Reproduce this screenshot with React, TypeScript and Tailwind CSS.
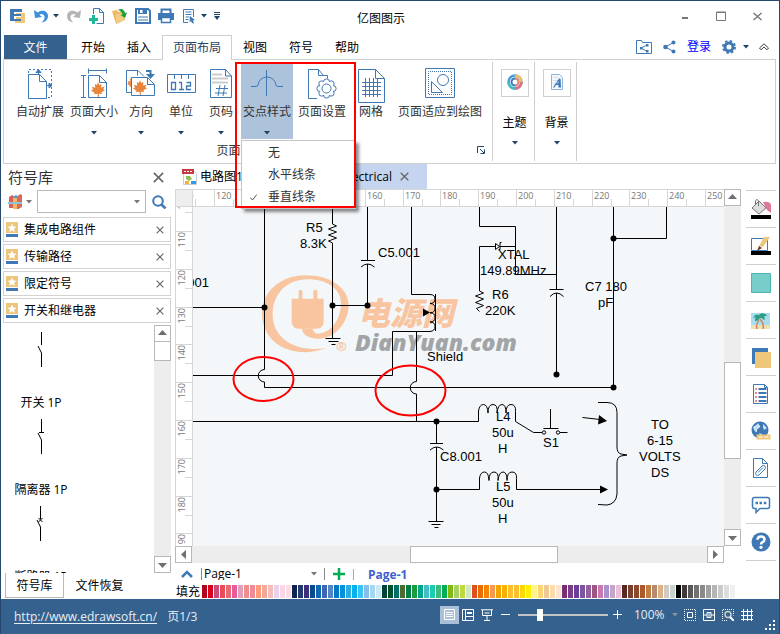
import React from "react";

type Kids = { children?: React.ReactNode };

function Ico({ w = 16, h = 16, children, className = "" }: Kids & { w?: number; h?: number; className?: string }) {
  return (
    <svg width={w} height={h} viewBox={`0 0 ${w} ${h}`} fill="none" className={`shrink-0 ${className}`} aria-hidden="true">
      {children}
    </svg>
  );
}

function Caret({ color = "#1f4468", className = "" }: { color?: string; className?: string }) {
  return (
    <Ico w={6} h={4} className={className}>
      <path d="M0 0h6L3 3.5z" fill={color} />
    </Ico>
  );
}

const B = "#3f79b5";

/* ---------- Title bar ---------- */

function TitleBar() {
  const btn = "flex items-center";
  return (
    <header className="grid h-[34px] shrink-0 grid-cols-[1fr_auto_1fr] items-center pr-[17px] pl-[9px]">
      <div className="flex items-center gap-[7px] pb-1">
        <Ico>
          <path d="M6 5h7v2H6zM6 9h7v2H6zM11 5h4v10H5v-2h6z" fill="#efc77b" />
          <path d="M0 1h12v3H4v2h7v2H4v3h7v2H0z" fill={B} />
        </Ico>
        <button className={`${btn} gap-1`} aria-label="Undo">
          <Ico>
            <path d="M1 2l1 8 7-1-2.600-2.300C9 5 12 7 11.500 10c-.3 2-1.500 3-3 4.500 4-.5 6.500-3 6.500-6.500 0-5-6-7-10.300-3.500z" fill="#3c8fdc" />
          </Ico>
          <Caret />
        </button>
        <button className={btn} aria-label="Redo">
          <Ico>
            <path d="M15 2l-1 8-7-1 2.600-2.300C7 5 4 7 4.500 10c.3 2 1.500 3 3 4.500C3.500 14 1 11.500 1 8c0-5 6-7 10.300-3.500z" fill="#b4b4b4" />
          </Ico>
        </button>
        <button className={btn} aria-label="New">
          <Ico>
            <path d="M4.500 6V.5h6l4 4v11h-7M10.500.5v4h4" stroke={B} />
            <path d="M3 7h3v3h3v3H6v3H3v-3H0v-3h3z" fill="#1fb999" />
          </Ico>
        </button>
        <button className={btn} aria-label="Open">
          <Ico>
            <path d="M0 3l5-1 1 2 6-1 1 9-9 4z" fill="#efb95c" />
            <path d="M4 6l10-1-3 8-7 3z" fill="#f3cd85" />
            <path d="M6 2c3-2 6-1 7 3l2-.5L13 10 8.500 7l2-.6C10 4 8.500 3 6 2z" fill="#18a03c" />
          </Ico>
        </button>
        <button className={btn} aria-label="Save">
          <Ico>
            <path d="M1 1h12l2 2v12H1z" fill="#fff" stroke={B} strokeWidth="2" />
            <path d="M3 1h9v5H3z" fill={B} />
            <path d="M5 2h5v3H5z" fill="#fff" />
            <path d="M8 2h2v3H8zM3 9h10M3 12h10" stroke={B} fill={B} />
          </Ico>
        </button>
        <button className={btn} aria-label="Print">
          <Ico>
            <path d="M3.500 5V1.500h9V5" stroke={B} strokeWidth="2" />
            <path d="M0 5h16v7H0z" fill={B} />
            <path d="M3.500 9.500h9v5h-9z" fill="#fff" stroke={B} strokeWidth="1.500" />
          </Ico>
        </button>
        <button className={`${btn} gap-1`} aria-label="Quick styles">
          <Ico>
            <path d="M12.500 9V1.500h-10v13H7" stroke={B} />
            <path d="M4.500 4h6M4.500 6.500h6M4.500 9h4M4.500 11.500h3" stroke={B} />
            <path d="M9 8l5 4-2 .5 1 3-2-.5-1-2-1.500 1.500z" fill={B} />
          </Ico>
          <Caret />
        </button>
        <button className={btn} aria-label="Customize toolbar">
          <Ico w={6} h={8}>
            <path d="M0 .5h6M0 2.500h6" stroke="#1f4468" />
            <path d="M0 4h6L3 8z" fill="#1f4468" />
          </Ico>
        </button>
      </div>
      <h1 className="pt-0.5 pr-2.5 text-xs text-black">亿图图示</h1>
      <div className="flex items-center justify-end gap-[27px] pb-1 text-[#777]">
        <button aria-label="Minimize" className={btn}><Ico w={8} h={10}><path d="M1 7h6" stroke="currentColor" strokeWidth="2" /></Ico></button>
        <button aria-label="Maximize" className={btn}><Ico w={10} h={10}><path d="M.5 1h9v8.500h-9zM0 1.500h10" stroke="currentColor" /></Ico></button>
        <button aria-label="Close" className={btn}><Ico w={9} h={9}><path d="M.5 1l8 7M8.500 1l-8 7" stroke="currentColor" strokeWidth="1.400" /></Ico></button>
      </div>
    </header>
  );
}

/* ---------- Ribbon tabs ---------- */

function MenuTabs() {
  const tab = "h-6 w-[46px] pt-px text-xs text-black";
  return (
    <nav className="relative z-10 flex h-6 shrink-0 items-center pr-[10px] pl-[3px]">
      <button className="h-6 w-[63px] bg-[#34618e] pt-px text-xs text-white">文件</button>
      <span className="w-[3px]" />
      <button className={tab}>开始</button>
      <button className={tab}>插入</button>
      <button className="-mb-px h-[25px] w-[70px] border border-b-0 border-[#cfcfcf] bg-white text-xs text-[#1f4468]">页面布局</button>
      <button className={tab}>视图</button>
      <button className={tab}>符号</button>
      <button className={tab}>帮助</button>
      <div className="ml-auto flex items-center">
        <button aria-label="Shared folder">
          <Ico w={16} h={14}>
            <path d="M.5 13.500V.5h5l1 2h9v11z" stroke={B} />
            <path d="M11 5L5 8l6 3.500" stroke={B} />
            <path d="M10 4h2.500v2.500H10zM4 7h2.500v2.500H4zM10 10h2.500v2.500H10z" fill={B} />
          </Ico>
        </button>
        <button aria-label="Share" className="ml-[11px]">
          <Ico w={13} h={14}>
            <path d="M10.500 2.500L2.500 7l8 4.500" stroke={B} />
            <circle cx="10.500" cy="2.500" r="2" fill={B} /><circle cx="2.500" cy="7" r="2.300" fill={B} /><circle cx="10.500" cy="11.500" r="2" fill={B} />
          </Ico>
        </button>
        <a href="#login" className="ml-[11px] text-xs text-[#0000ff]">登录</a>
        <button aria-label="Settings" className="ml-[11px] flex items-center gap-[7px]">
          <Ico w={14} h={14}>
            <circle cx="7" cy="7" r="4" stroke={B} strokeWidth="3" />
            <circle cx="7" cy="7" r="6" stroke={B} strokeWidth="2" strokeDasharray="2.400 2.312" />
          </Ico>
          <Caret />
        </button>
        <button aria-label="Collapse ribbon" className="ml-[10px]">
          <Ico w={10} h={8}>
            <path d="M.5 5L5 .8 9.500 5 8 6.800 5 4 2 6.800z" stroke="#444" />
          </Ico>
        </button>
      </div>
    </nav>
  );
}

/* ---------- Ribbon ---------- */

const LEAF = "M7 0l1.300 3 2.200-1-.5 3.500 3.500-.8-1.200 2.600 1.700 1-3.500 2 .5 1.700-3.200-.3.200 3.300-1.200-.2-.2-3-3.600.5.6-1.500L0 8.500l2-.9L.8 4.700l3.500 1L3.700 2 6 3z";

const GEAR_LOBES = Array.from({ length: 8 }, (_, i) => {
  const a = (i * Math.PI) / 4;
  return [18.5 + 6.6 * Math.cos(a), 20.5 + 6.6 * Math.sin(a)];
});

function RibbonButton({ label, width, caret, active, children }: Kids & { label: string; width: string; caret?: boolean; active?: boolean }) {
  return (
    <button className={`flex h-[75px] shrink-0 flex-col items-center pt-1 ${width} ${active ? "bg-[#adc3db]" : ""}`}>
      <span className="flex h-9 items-start justify-center">{children}</span>
      <span className="text-xs leading-4 whitespace-nowrap text-[#333]">{label}</span>
      {caret && <Caret className="mt-[11px]" />}
    </button>
  );
}

function Popup() {
  const item = "flex h-[22px] w-full items-center gap-[11px] pl-2 text-left text-xs text-[#333]";
  return (
    <div role="menu" className="absolute top-[76px] left-0 z-20 w-[115px] border border-[#c4c4c4] bg-white pt-px shadow-[3px_3px_3px_rgba(0,0,0,0.45)]">
      <button role="menuitem" className={item}><span className="w-[7px]" />无</button>
      <button role="menuitem" className={item}><span className="w-[7px]" />水平线条</button>
      <button role="menuitem" className={item}>
        <Ico w={7} h={7}><path d="M.3 3.500L2.500 6 6.800.5" stroke="#555" /></Ico>
        垂直线条
      </button>
    </div>
  );
}

function Ribbon() {
  return (
    <section className="mr-[3px] ml-[2px] flex h-[105px] shrink-0 border border-[#cfcfcf]">
      <div className="my-[2px] flex w-[489px] flex-col border-r border-[#cfcfcf] pt-[2px]">
        <div className="flex pl-[9px]">
          <RibbonButton label="自动扩展" width="w-[54px]">
            <Ico w={25} h={31}>
              <path d="M.5 30.500v-24h11l7 7v17zM11.500 6.500v7h7" stroke={B} />
              <path d="M.5 5V1.500h23v28H20" stroke={B} strokeDasharray="2 2" />
              <path d="M10.500 6V2M8 4.500l2.500-3 2.500 3zM18 17.500h5M21 15l3 2.500-3 2.500z" stroke={B} fill={B} />
            </Ico>
          </RibbonButton>
          <RibbonButton label="页面大小" width="w-[54px]" caret>
            <Ico w={26} h={31}>
              <path d="M7.500.5v5M25.500.5v5M7.500 2.500h18M0 7.500h5M0 29.500h5M2.500 7.500v22M7.500 29.500v-22h11l7 7v15zM18.500 7.500v7h7" stroke={B} />
              <path d={LEAF} transform="translate(10 14)" fill="#e8843c" />
            </Ico>
          </RibbonButton>
          <RibbonButton label="方向" width="w-10" caret>
            <Ico w={30} h={31}>
              <path d="M5 24.500H.5v-22H12l6 6M11.500 2.500v5" stroke={B} />
              <path d={LEAF} transform="translate(1 9) scale(.8)" fill="#e8843c" />
              <path d="M5.500 9.500h16l7 7v11h-23z" fill="#fff" stroke={B} />
              <path d="M21.500 9.500v7h7" stroke={B} />
              <path d={LEAF} transform="translate(7 12)" fill="#e8843c" />
              <path d="M20 3h4.500v4" stroke={B} strokeWidth="2" />
              <path d="M20 6h9l-4.500 5z" fill={B} />
            </Ico>
          </RibbonButton>
          <RibbonButton label="单位" width="w-10" caret>
            <Ico w={29} h={31}>
              <path d="M.5 6.500h28v18H.5zM7.500 7v4M14.500 7v4M21.500 7v4" stroke={B} />
              <path d="M4.500 14.500h4v7h-4zM12 14.500h2.500v7M12 21.500h5M19.500 14.500h4v3.500h-4v3.500h4.500" stroke={B} strokeWidth="1.300" />
            </Ico>
          </RibbonButton>
          <RibbonButton label="页码" width="w-10" caret>
            <Ico w={23} h={31}>
              <path d="M.5 29.500v-28h15l6 6.500v21.500zM15.500 1.500v6.500h6" stroke={B} />
              <path d="M2 6.500h10M2 10.500h16M2 14.500h16" stroke="#ccc" strokeWidth="2" />
              <path d="M6 20.500h12M5 25h12M10 17l-2 11M15 17l-2 11" stroke={B} />
            </Ico>
          </RibbonButton>
          <div className="relative flex">
            <RibbonButton label="交点样式" width="w-[52px]" caret active>
              <Ico w={32} h={31}>
                <path d="M0 18.500h5l2-1a9 8.500 0 0 1 18 0l2 1h5M15.500 2v26" stroke={B} />
              </Ico>
            </RibbonButton>
            <RibbonButton label="页面设置" width="w-[58px]">
              <Ico w={29} h={31}>
                <path d="M9 30.500H.5v-29h10l5 6h4v3M10.500 1.500v6h7" stroke={B} />
                {GEAR_LOBES.map(([x, y], i) => <circle key={i} cx={x} cy={y} r="3" fill="#fff" stroke={B} />)}
                <circle cx="18.500" cy="20.500" r="7.200" fill="#fff" />
                <circle cx="18.500" cy="20.500" r="4.500" stroke={B} />
              </Ico>
            </RibbonButton>
            <Popup />
            <div className="pointer-events-none absolute -top-0.5 -left-1.5 z-30 h-[146px] w-[121px] border-2 border-[#ff0000]" />
          </div>
          <RibbonButton label="网格" width="w-10">
            <Ico w={27} h={36}>
              <path d="M.5 34.500v-33h17l9 9v24zM17.500 1.500v9h9" stroke={B} />
              <path d="M4 14.500h19M4 18.500h19M4 22.500h19M4 26.500h19M7.500 10v19M11.500 10v19M15.500 10v19M19.500 10v19" stroke={B} />
            </Ico>
          </RibbonButton>
          <RibbonButton label="页面适应到绘图" width="w-[98px]">
            <Ico w={30} h={31}>
              <path d="M.5.5h29v29H.5z" stroke={B} />
              <path d="M3.500 3.500h23v23h-23z" stroke={B} strokeDasharray="1 1" strokeDashoffset=".5" />
              <circle cx="18" cy="12" r="5.500" stroke={B} />
              <path d="M6.500 13.500v11h11z" stroke={B} />
            </Ico>
          </RibbonButton>
        </div>
        <div className="flex flex-1 items-center pr-[7px]">
          <span className="flex-1 pt-px text-center text-xs text-[#333]">页面设置</span>
          <button aria-label="Page setup options">
            <Ico w={8} h={8}>
              <path d="M.5 7V.5H7M3 3l4 4M7.500 3.500v4h-4" stroke="#1f4468" />
            </Ico>
          </button>
        </div>
      </div>
      <BigButton label="主题">
        <Ico>
          <circle cx="8" cy="8" r="6.500" stroke="#4b9fd6" strokeWidth="2.500" />
          <path d="M8 1.500A6.500 6.500 0 0 1 14.500 8" stroke="#f3bb66" strokeWidth="2.500" />
          <path d="M14.500 8A6.500 6.500 0 0 1 8 14.500" stroke="#e66a86" strokeWidth="2.500" />
          <path d="M8 14.500A6.500 6.500 0 0 1 1.500 8" stroke="#3dbec2" strokeWidth="2.500" />
          <circle cx="8" cy="8" r="3.500" stroke="#3f79b5" strokeWidth="2" />
          <path d="M8 4.500a3.500 3.500 0 0 1 0 7" stroke="#ef8f72" strokeWidth="2" />
        </Ico>
      </BigButton>
      <BigButton label="背景">
        <Ico w={12} h={16}>
          <path d="M.5.5h8l3 3v12H.5z" fill="#f3f8fd" stroke="#8fb3d9" />
          <path d="M2 3.500h5M2 6.500h8M2 9.500h8" stroke="#cfdfef" />
          <path d="M2 13.500L8 4.500h1.500l.5 9H7.500l-.2-2.500H5l-1.500 2.500zM6 9.500h1.400V7z" fill={B} fillRule="evenodd" />
        </Ico>
      </BigButton>
    </section>
  );
}

function BigButton({ label, children }: Kids & { label: string }) {
  return (
    <button className="my-[2px] flex w-[42px] shrink-0 flex-col items-center border-r border-[#cfcfcf] pt-[7px] pl-[2px]">
      <span className="flex size-7 items-center justify-center border border-[#cfcfcf] pb-0.5">{children}</span>
      <span className="mt-[18px] text-xs leading-4 text-black">{label}</span>
      <Caret className="mt-[10px]" />
    </button>
  );
}

/* ---------- Symbol library ---------- */

function Cross({ size = 9 }: { size?: number }) {
  return (
    <svg width={size} height={size} viewBox="0 0 9 9" className="shrink-0" aria-hidden="true">
      <path d="M.7.7l7.600 7.600M8.300.7L.7 8.300" stroke="#666" strokeWidth="1.300" />
    </svg>
  );
}

function ArrowButton({ dir }: { dir: "up" | "down" | "left" | "right" }) {
  const d = { up: "M1 7h9L5.500 2z", down: "M1 4h9L5.500 9z", left: "M8 1v9L3 5.500z", right: "M3 1v9l5-4.500z" }[dir];
  return (
    <button aria-label={`Scroll ${dir}`} className="flex size-[17px] shrink-0 items-center justify-center border border-[#b8b8b8] bg-white">
      <Ico w={11} h={11}><path d={d} fill="#707070" /></Ico>
    </button>
  );
}

const LIBRARIES = ["集成电路组件", "传输路径", "限定符号", "开关和继电器"];

const SYMBOLS = [
  { name: "开关 1P", path: "M9.500 1v13M9.500 22v14M9.500 22L6 15" },
  { name: "隔离器 1P", path: "M9.500 1v13M7 14.500h5M9.500 22v14M9.500 22L6 15" },
  { name: "断路器 1P", path: "M8.500 1v13M6.500 13l4 4M10.500 13l-4 4M8.500 22v14M8.500 22L5 15" },
];

function SymbolPanel() {
  return (
    <aside className="flex w-[174px] shrink-0 flex-col pl-[2px] pr-1">
      <div className="flex h-[26px] shrink-0 items-center justify-between pr-[7px] pl-[5px]">
        <h2 className="text-[15px] text-[#333]">符号库</h2>
        <button aria-label="Close panel"><Cross size={11} /></button>
      </div>
      <div className="mb-1 flex h-[23px] shrink-0 items-center pl-[5px] pr-[4px]">
        <button aria-label="Libraries" className="flex items-center gap-[3px]">
          <Ico w={15} h={16}>
            <path d="M1 3l3-2 3 2v11H1z" fill="#dd5f5a" /><path d="M5 3l3-2 3 2v12H5z" fill="#4e9bcf" /><path d="M9 3l3-3 2 1v12l-4 2H9z" fill="#d9685f" />
            <path d="M5 4h4v11H5z" fill="#f0bb60" /><path d="M0 8h14v2H0z" fill="#8cc3dd" />
          </Ico>
          <Caret color="#777" />
        </button>
        <div className="ml-[5px] flex h-[23px] w-[109px] items-center border border-[#b8b8b8] pr-[5px]">
          <input aria-label="Search symbols" className="h-full min-w-0 flex-1 px-1 text-xs outline-none" />
          <button aria-label="Search history"><Caret color="#777" /></button>
        </div>
        <button aria-label="Search" className="ml-auto">
          <Ico w={15} h={14}>
            <circle cx="6" cy="6" r="4.800" stroke={B} strokeWidth="2" /><path d="M9.500 9.500l4 4" stroke={B} strokeWidth="2.500" />
          </Ico>
        </button>
      </div>
      <div className="flex flex-col gap-0.5">
        {LIBRARIES.map((n) => (
          <div key={n} className="flex h-[25px] items-center border border-[#d3d3d3] pr-[6px] pl-[2px]">
            <Ico w={12} h={15}>
              <path d="M0 0h12v11H0z" fill="#edc57b" /><path d="M0 12h12v3H0z" fill={B} />
              <path d="M6 1.500l1.300 2.900 3.200.3-2.400 2.100.7 3.100L6 8.300 3.200 9.900l.7-3.100L1.500 4.700l3.200-.3z" fill="#fff" />
            </Ico>
            <span className="ml-1.5 flex-1 text-xs text-black">{n}</span>
            <button aria-label={`Close ${n}`}><Cross size={8} /></button>
          </div>
        ))}
      </div>
      <div className="mt-0.5 flex min-h-0 flex-1">
        <ul className="flex-1 overflow-hidden pt-1.5">
          {SYMBOLS.map((s) => (
            <li key={s.name} className="flex h-[87px] w-[76px] flex-col items-center">
              <Ico w={18} h={36}><path d={s.path} stroke="#000" /></Ico>
              <span className="mt-7 text-xs leading-4 whitespace-nowrap text-black">{s.name}</span>
            </li>
          ))}
        </ul>
        <div className="flex w-[17px] shrink-0 flex-col bg-[#ededed]">
          <ArrowButton dir="up" />
          <div className="h-[19px] border border-t-0 border-[#b8b8b8] bg-white" />
          <div className="flex-1" />
          <ArrowButton dir="down" />
        </div>
      </div>
      <div className="flex h-[26px] shrink-0 items-start pl-[2px] text-xs text-black">
        <button className="h-[25px] w-[59px] border border-t-0 border-[#b8b8b8] pt-px">符号库</button>
        <button className="h-[25px] w-[71px]">文件恢复</button>
      </div>
    </aside>
  );
}

/* ---------- Drawing area ---------- */

const TOP_MARKS = Array.from({ length: 15 }, (_, i) => 110 + i * 10);
const SIDE_MARKS = Array.from({ length: 10 }, (_, i) => 100 + i * 10);
const GAP = 37.8;

function TopRuler() {
  return (
    <svg width="100%" height="18" className="block bg-white" aria-hidden="true">
      <path d="M0 .5h560" stroke="#d6d6d6" />
      {TOP_MARKS.map((m, i) => {
        const x = Math.round(i * GAP - 17.1) + 0.5;
        return (
          <g key={m}>
            <path d={`M${x} 0v18M${x + 19} 10v8`} stroke="#d6d6d6" />
            <text x={x + 1.5} y="10" fontSize="9" fill="#777">{m}</text>
          </g>
        );
      })}
      <path d="M0 17.500h560" stroke="#d6d6d6" />
    </svg>
  );
}

function SideRuler() {
  return (
    <svg width="18" height="339" className="block shrink-0 bg-white" aria-hidden="true">
      <path d="M.5 0v339M17.500 0v339" stroke="#d6d6d6" />
      {SIDE_MARKS.map((m, i) => {
        const y = Math.round(i * GAP - 13.8) + 0.5;
        return (
          <g key={m}>
            <path d={`M0 ${y}h18M10 ${y + 19}h8`} stroke="#d6d6d6" />
            <text transform={`translate(9.500 ${y + 16}) rotate(-90)`} fontSize="9" fill="#777">{m}</text>
          </g>
        );
      })}
    </svg>
  );
}

const WIRES = [
  "M264.500 207V369.500a6 6 0 0 0 0 12.500V387.500H613.500",
  "M193 307.500H264.500",
  "M193 375.500H392.500V331.500H431",
  "M193 421.500H478.500",
  "M332.500 207V224l4 2-8 3 8 3-8 3 8 3-8 3 4 2V338.500",
  "M325.500 338.500h15M328.500 341.500h10M331.500 344.500h4",
  "M332.500 305.500H367.500",
  "M367.500 207V260.500M361 260.500h14M361 267q6.500-6 13.500 0M367.500 264V305.500",
  "M411.500 207V294.500H430M416.500 331.500V381.500a6 6 0 0 0 0 12.500V421.500",
  "M430 294.500q5 0 5 4.500t-5 4.500q5 0 5 4.700t-5 4.600q5 0 5 4.700t-5 4.500q5 0 5 4.500t-5 5M435.500 294v37",
  "M479.500 207V226.500H515.500V274.500H556.500",
  "M515.500 246.500H500M496 246.500H479.500V291l4 2-8 3 8 3-8 3.500 8 3-7 3 3 3",
  "M495.500 243.500v6l4-3zM501.500 242.500h-1.500v7h-1.500",
  "M556.500 207V289.500M549.500 289.500h14M550 296.500q6.500-7 13.500 0M556.500 293V374.500",
  "M613.500 207V387.500M613.500 238.500H666.500V207",
  "M478.500 421.500V411q1-6.500 5-6.500t4.500 8.500q0-8.500 5-8.500t4 8.500q1-8.500 5-8.500t4 8.500q0-8.500 5-8.500t4.500 7V421.500L533.500 432.500H542M560 432.500h7.500M543.500 428.500h15M550.500 409v19.500",
  "M436.500 421.500V443.500M430 443.500h13M430 450q6.500-6 13.500 0M436.500 447V521.500M428.500 521.500h15M431.500 524.500h9M434.500 527.500h4",
  "M436.500 489.500H479.500V478q1-6 5-6t4.500 8.500q0-8.500 5-8.500t4 8.500q1-8.500 5-8.500t4 8.500q0-8.500 5-8.500t4.500 6.500V489.500H602",
  "M582.500 417.500L600 419.500",
  "M598 402.500h9q10 0 10 10V447q0 6 4 7l6 1-6 1q-4 1-4 7V494q-1 10-10 11l-9-.5",
];

const DOTS: [number, number][] = [
  [264.5, 307.5], [332.5, 305.5], [367.5, 305.5], [613.5, 238.5], [613.5, 387.5],
  [556.5, 374.5], [436.5, 421.5], [436.5, 489.5],
];

const LABELS: [number, number, string][] = [
  [306, 232, "R5"], [300, 248, "8.3K"], [378, 257, "C5.001"], [167, 287, "C4.001"],
  [427, 361, "Shield"], [498, 259, "XTAL"], [480, 275, "149.89MHz"], [492, 299, "R6"],
  [485, 315, "220K"], [585, 291, "C7 180"], [598, 307, "pF"], [496, 421, "L4"],
  [492, 437, "50u"], [498, 453, "H"], [543, 447, "S1"], [440, 461, "C8.001"],
  [496, 491, "L5"], [492, 507, "50u"], [498, 523, "H"], [651, 429, "TO"],
  [647, 445, "6-15"], [639, 461, "VOLTS"], [651, 477, "DS"],
];

function Diagram() {
  return (
    <svg width="532" height="339" viewBox="193 207 532 339" fill="none" className="block shrink-0" role="img" aria-label="Circuit diagram">
      <g transform="translate(256 268) scale(.3333)" fill="#f8c5a0">
        <path d="M212 240C120 275 18 235 18 135 18 70 75 22 150 22c75 0 128 40 128 90 0 53-43 100-88 100-25 0-50-7-52-30h32c2 14 15 18 28 13 37-10 57-50 57-90 0-40-40-71-100-71C95 34 50 75 50 140c0 65 60 115 162 100z" />
        <path d="M107 92h21V70q0-5 5.500-5t5.500 5v22h33V70q0-5 6-5t6 5v22h19v68q0 22-22 22h-52q-22 0-22-22z" />
      </g>
      <text x="336" y="351" fontSize="13" fontFamily="Open Sans" fontWeight="700" fill="#f8c5a0">®</text>
      <text x="358" y="325" fontSize="32" fontFamily="Noto Sans CJK SC" fontWeight="900" fontStyle="italic" fill="#f8c5a0">电源网</text>
      <text x="355" y="351" fontSize="23" fontFamily="Open Sans" fontWeight="800" fontStyle="italic" fill="#a2a5a7">DianYuan.com</text>
      <g stroke="#000" strokeWidth="1">
        {WIRES.map((d) => <path key={d} d={d} />)}
        <circle cx="544" cy="432.500" r="1.700" /><circle cx="558" cy="432.500" r="1.700" />
      </g>
      {DOTS.map(([x, y]) => <circle key={`${x}-${y}`} cx={x} cy={y} r="3" fill="#000" />)}
      <path d="M423 308.500v8l7-4zM599 415l8 6-9 3.500zM600 485.500l8 4-8 4z" fill="#000" />
      <g fontFamily="Liberation Sans" fontSize="13" fill="#000">
        {LABELS.map(([x, y, t]) => <text key={`${x}-${y}`} x={x} y={y}>{t}</text>)}
      </g>
      <g stroke="#f00" strokeWidth="2">
        <ellipse cx="263.500" cy="379" rx="30" ry="22" />
        <ellipse cx="410.500" cy="390.500" rx="35" ry="25" />
      </g>
    </svg>
  );
}

const SWATCHES = [
  "bg-[#b5001f]", "bg-[#d9001b]", "bg-[#c94b7c]", "bg-[#e94b5a]", "bg-[#e86b74]", "bg-[#e85a9b]", "bg-[#e0a0b8]", "bg-[#f08e8e]",
  "bg-[#ee8b96]", "bg-[#ff9a7a]", "bg-[#f2a898]", "bg-[#f6bcba]", "bg-[#e8d4ea]", "bg-[#fdd5e8]", "bg-[#fbdde4]", "bg-[#0e2350]",
  "bg-[#243a72]", "bg-[#3f2e78]", "bg-[#074a8f]", "bg-[#0f69b0]", "bg-[#3f66b5]", "bg-[#5684c6]", "bg-[#007ac4]", "bg-[#0092dc]",
  "bg-[#2eaee0]", "bg-[#00b2f0]", "bg-[#38c5f5]", "bg-[#85bfe8]", "bg-[#a2d8f0]", "bg-[#cbe8f3]", "bg-[#004438]", "bg-[#00512c]",
  "bg-[#007069]", "bg-[#4e6a2f]", "bg-[#007f49]", "bg-[#1c9b3c]", "bg-[#00a889]", "bg-[#48bcc4]", "bg-[#18cdb0]", "bg-[#3dba7c]",
  "bg-[#00af50]", "bg-[#82b90f]", "bg-[#a4d268]", "bg-[#bfd83c]", "bg-[#cde7c8]", "bg-[#e04f1d]", "bg-[#ea6d00]", "bg-[#f58300]",
  "bg-[#f49a55]", "bg-[#f3a400]", "bg-[#f9b000]", "bg-[#fdbf2d]", "bg-[#fabd36]", "bg-[#ffd800]", "bg-[#fff000]", "bg-[#fff38c]",
  "bg-[#fdd474]", "bg-[#ecc995]", "bg-[#fddcaa]", "bg-[#fbe5cf]", "bg-[#7a2c74]", "bg-[#7c3d86]", "bg-[#6b3f97]", "bg-[#7a579c]",
  "bg-[#96609e]", "bg-[#9d5583]", "bg-[#cb7ab0]", "bg-[#a892cd]", "bg-[#c5a6c8]", "bg-[#eabfd8]", "bg-[#57291d]", "bg-[#79402f]",
  "bg-[#8e4b2c]", "bg-[#ac5a2a]", "bg-[#c27d42]", "bg-[#b58a70]", "bg-[#dbb384]", "bg-[#cfcac5]", "bg-[#c8d5cb]", "bg-[#000000]",
  "bg-[#3f3a39]", "bg-[#595757]", "bg-[#727171]", "bg-[#898989]", "bg-[#9fa0a0]", "bg-[#b5b5b6]", "bg-[#c9caca]", "bg-[#dcdddd]",
  "bg-[#efefef]",
];

function Workspace() {
  return (
    <main className="flex min-w-0 flex-1 flex-col">
      <div className="flex h-[25px] shrink-0 items-center text-xs text-black">
        <button className="flex h-full w-[125px] items-center gap-0.5 pl-[7px]">
          <Ico>
            <path d="M1.500 1.500h10l3 3v11h-13z" fill="#fff" stroke="#ccc" />
            <path d="M0 0h12v5H0z" fill="#c63c42" /><path d="M2 2.500h8" stroke="#fff" strokeDasharray="2 1" />
            <path d="M4 7h4l2 3-3 2-3-2z" fill="#8cc152" /><path d="M9 12h5v3H9z" fill="#2d9cea" /><path d="M3 12h4v3H3z" fill="#f2b33d" />
          </Ico>
          电路图1
        </button>
        <button className="flex h-full w-[127px] items-center justify-end gap-2 bg-[#c5d5ef] pr-[18px]">
          Electrical <Cross />
        </button>
      </div>
      <div className="flex min-h-0 flex-1">
        <div className="flex min-w-0 flex-1 flex-col">
          <div className="flex h-[18px] shrink-0">
            <div className="w-[18px] shrink-0 border border-[#d6d6d6] bg-[#eee]" />
            <div className="min-w-0 flex-1"><TopRuler /></div>
          </div>
          <div className="flex min-h-0 flex-1 overflow-hidden">
            <SideRuler />
            <div className="min-w-0 flex-1 overflow-hidden bg-[#f3f7fa]"><Diagram /></div>
          </div>
        </div>
        <div className="flex w-[17px] shrink-0 flex-col bg-[#ededed]">
          <ArrowButton dir="up" />
          <div className="grow-[156]" />
          <div className="h-[97px] border border-[#b8b8b8] bg-white" />
          <div className="grow-[70]" />
          <ArrowButton dir="down" />
        </div>
      </div>
      <div className="mr-[17px] flex h-[17px] shrink-0 bg-[#ededed]">
        <ArrowButton dir="left" />
        <div className="grow-[218]" />
        <div className="w-[148px] border border-[#b8b8b8] bg-white" />
        <div className="grow-[149]" />
        <ArrowButton dir="right" />
      </div>
      <div className="flex h-[22px] shrink-0 items-center pl-[6px] text-xs">
        <button aria-label="Show pages"><Ico w={12} h={8}><path d="M1 7l5-5 5 5" stroke={B} strokeWidth="2.500" /></Ico></button>
        <div className="relative ml-2 flex w-[124px] items-center border-x border-[#888]">
          <select aria-label="Page" className="h-[12px] w-full appearance-none bg-transparent pl-[2px] text-xs leading-3 text-black outline-none">
            <option>Page-1</option>
          </select>
          <Caret color="#777" className="pointer-events-none absolute right-[7px]" />
        </div>
        <button aria-label="Add page" className="ml-2"><Ico w={12} h={12}><path d="M6 0v12M0 6h12" stroke="#00ad50" strokeWidth="2.500" /></Ico></button>
        <span className="ml-2 h-[11px] w-px bg-[#aaa]" />
        <button className="ml-[14px] pt-px font-bold text-[#3f5fcc]">Page-1</button>
      </div>
      <div className="flex h-[14px] shrink-0 items-start">
        <span className="w-[27px] shrink-0 pl-px text-xs leading-[14px] text-black">填充</span>
        <div className="flex gap-px">
          {SWATCHES.map((c, i) => <button key={i} aria-label={`Fill color ${i + 1}`} className={`h-[13px] w-[5px] ${c}`} />)}
        </div>
      </div>
    </main>
  );
}

/* ---------- Right tool strip ---------- */

const TOOLS: { name: string; art: React.ReactNode }[] = [
  { name: "Fill", art: <><path d="M12 3q7-1 8 3v8l-4-3z" fill="#e0779b" /><path d="M1 9l7-7 7 7-7 6z" fill="#ddd" stroke="#777" /><path d="M4.500 6V1.500Q6-.5 7.500 1.500V7" stroke="#777" /><path d="M0 16h20v4H0z" fill="#000" /></> },
  { name: "Line", art: <><path d="M.5 2.500h16v12H.5z" stroke={B} fill="#fff" /><path d="M13 1h6l-7 10-4-1z" fill="#efc77b" /><path d="M8 10l3 2-5 3z" fill="#6b3a1f" /><path d="M0 15h20v4H0z" fill="#000" /></> },
  { name: "Shadow", art: <path d="M.5.5h19v19H.5z" fill="#76cdc9" stroke="#4fb5b0" /> },
  { name: "Picture", art: <><path d="M0 3h19v16H0z" fill="#a8dcf0" /><path d="M0 15h19v4H0z" fill="#f0dfb0" /><path d="M9 9c3 3 4 6 3 10M8 10c-2 2-3 5-2 9" stroke="#c98a5c" strokeWidth="1.500" /><path d="M2 8c2-4 4-4 6-3 2-3 6-2 9 1-2-.5-3 0-4 1 1 1 1 2 0 3-2-2-3-2-4-2-1 2-3 3-5 3 0-2 0-3 1-4z" fill="#2e9f83" /></> },
  { name: "Layers", art: <><path d="M1 1h16v16H1z" fill={B} /><path d="M4 5h16v16H4z" fill="#efc77b" /></> },
  { name: "Notes", art: <><path d="M2.500.5h11l3 3v16h-14z" stroke={B} fill="#fff" /><path d="M13.500.5v3h3" stroke={B} /><path d="M7.500 5h8M7.500 9h8M7.500 13h8M7.500 17h8" stroke={B} strokeWidth="2" /><path d="M4 5h2M4 9h2M4 13h2M4 17h2" stroke="#e88" strokeWidth="2" /></> },
  { name: "Hyperlink", art: <><circle cx="9" cy="9" r="8.500" fill={B} /><path d="M2 6c3-1 4-3 5-4 0 2 3 2 2 4s-3 1-3 4-3 0-4-4zM12 3l4 4-3 2-1-3zM8 12l3 1-1 4z" fill="#cfe2f3" /><path d="M6.500 14.500h6v3h-6zM12.500 14.500h6v3h-6z" fill="#fff" stroke="#efc77b" strokeWidth="2" /></> },
  { name: "Attachment", art: <><path d="M2.500.5h9l5 5v14h-14zM11.500.5v5h5" stroke={B} fill="#fff" /><path d="M5 14l6-6q2-1.500 3 0t0 3l-6 6q-2 1-3-.3T5 14zM7 14.500l5-5" stroke={B} /></> },
  { name: "Comment", art: <><path d="M3.500 2.500h13q2 0 2 2v7q0 2-2 2H9l-4 4v-4H3.500q-2 0-2-2v-7q0-2 2-2z" stroke={B} strokeWidth="1.500" /><path d="M4.500 8h2.500M8.500 8H11M12.800 8h2.500" stroke={B} strokeWidth="2.500" /></> },
  { name: "Help", art: <><circle cx="10" cy="10" r="9.500" fill={B} /><path d="M6.500 7.800q0-3.300 3.500-3.300t3.500 3q0 1.800-2 2.700-1.500.8-1.500 2.300" stroke="#fff" strokeWidth="2.500" /><circle cx="10" cy="15.300" r="1.600" fill="#fff" /></> },
];

function ToolStrip() {
  return (
    <div className="mr-[3px] ml-[5px] w-[30px] shrink-0 pt-[26px]">
      <div className="border-b border-[#cfcfcf]">
        {TOOLS.map((t) => (
          <button key={t.name} aria-label={t.name} className="flex h-[37px] w-full items-center justify-center border-t border-[#cfcfcf]">
            <Ico w={20} h={21}>{t.art}</Ico>
          </button>
        ))}
      </div>
    </div>
  );
}

/* ---------- Status bar ---------- */

function StatusBar() {
  return (
    <footer className="flex h-[35px] shrink-0 items-center bg-[#34618e] pr-[3px] pl-[13px] text-xs text-[#e8eef5]">
      <a href="http://www.edrawsoft.cn/" className="underline underline-offset-2">http://www.edrawsoft.cn/</a>
      <span className="ml-2.5">页1/3</span>
      <div className="ml-auto flex items-center pb-1">
        <button aria-label="Normal view" className="flex h-[18px] w-[19px] items-center justify-center bg-[#aac0d8]">
          <Ico w={11} h={11}><path d="M.5.5h10v10H.5zM2 3.500h7M2 5.500h7M2 7.500h7" stroke="#fff" /></Ico>
        </button>
        <button aria-label="Page view" className="ml-[3px]"><Ico w={12} h={12}><path d="M.5.500h11v11H.5zM3.500 0v12M4 7.500h7" stroke="#fff" /><path d="M5 3h5v2H5z" fill="#fff" /></Ico></button>
        <button aria-label="Presentation" className="ml-[7px]"><Ico w={12} h={12}><path d="M0 .8h12M1.500 1v5.500h9V1M3.500 4h5M6 6.500V11M3 11.500h6" stroke="#fff" /></Ico></button>
        <button aria-label="Zoom out" className="ml-2"><Ico w={9} h={9}><path d="M0 4.500h9" stroke="#fff" /></Ico></button>
        <input
          type="range"
          aria-label="Zoom"
          min={0}
          max={100}
          defaultValue={23}
          className="ml-2 h-[13px] w-[90px] appearance-none bg-transparent [&::-webkit-slider-runnable-track]:h-0.5 [&::-webkit-slider-runnable-track]:bg-[#c4c4c4] [&::-webkit-slider-thumb]:-mt-[5px] [&::-webkit-slider-thumb]:h-3 [&::-webkit-slider-thumb]:w-1.5 [&::-webkit-slider-thumb]:appearance-none [&::-webkit-slider-thumb]:bg-white"
        />
        <button aria-label="Zoom in" className="ml-[5px]"><Ico w={9} h={9}><path d="M0 4.500h9M4.500 0v9" stroke="#fff" /></Ico></button>
        <button className="ml-3 flex w-[44px] items-center justify-between">100% <Caret color="#8a8f96" /></button>
        <button aria-label="Fit page" className="ml-1.5"><Ico w={12} h={12}><path d="M.5.500h11v11H.5z" stroke="#fff" strokeDasharray="1 1" strokeDashoffset=".5" /><path d="M3.500 3.500h5v5h-5z" stroke="#fff" /></Ico></button>
        <button aria-label="Fit width" className="ml-[7px]"><Ico w={12} h={12}><path d="M.5.500h11v11H.5zM4 3.500h4v5H4zM0 6h4M8 6h4M6 4v4" stroke="#fff" /></Ico></button>
        <button aria-label="Zoom area" className="ml-[7px]"><Ico w={12} h={12}><path d="M11.500 6.500V.5H.5v11H6" stroke="#fff" strokeDasharray="1 1" strokeDashoffset=".5" /><circle cx="6" cy="5.500" r="3" stroke="#ccc" strokeWidth="1.500" /><path d="M8 8l4 4" stroke="#fff" strokeWidth="2" /></Ico></button>
        <button aria-label="Grid" className="ml-[7px]"><Ico w={12} h={12}><path d="M2.500 0v12M6.500 0v12M10.500 0v12M0 2.500h12M0 6.500h12M0 10.500h12" stroke="#fff" /></Ico></button>
      </div>
      <Ico w={11} h={11} className="mb-[3px] ml-3 self-end">
        <path d="M8 0h2v2H8zM8 4h2v2H8zM8 8h2v2H8zM4 4h2v2H4zM4 8h2v2H4zM0 8h2v2H0z" fill="#fff" />
      </Ico>
    </footer>
  );
}

export default function App() {
  return (
    <div className="flex h-screen flex-col overflow-hidden border-x border-t border-[#26486f] bg-white font-['Open_Sans','Noto_Sans_CJK_SC',sans-serif]">
      <TitleBar />
      <MenuTabs />
      <Ribbon />
      <div className="flex min-h-0 flex-1">
        <SymbolPanel />
        <Workspace />
        <ToolStrip />
      </div>
      <StatusBar />
    </div>
  );
}
